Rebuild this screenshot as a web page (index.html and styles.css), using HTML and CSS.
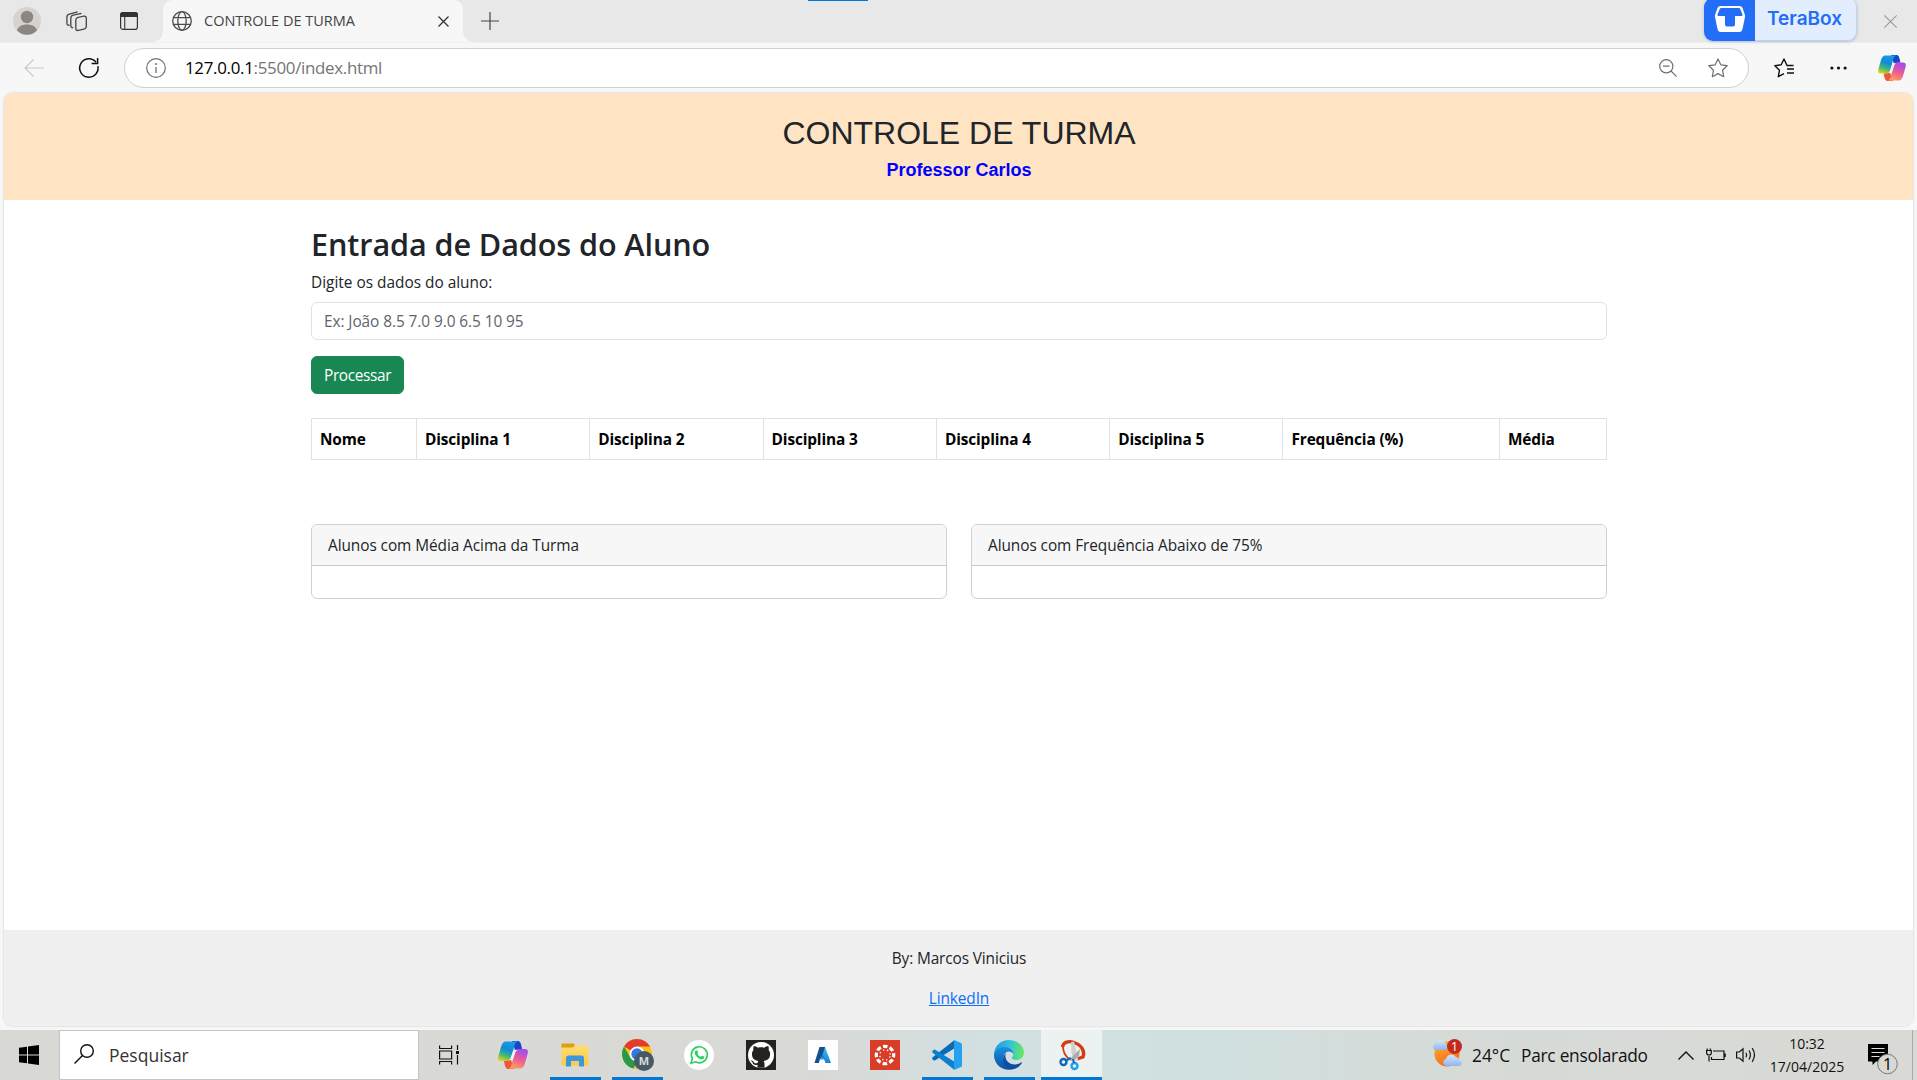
FILE: index.html
```html
<!DOCTYPE html>
<html lang="pt-BR">
<head>
<meta charset="utf-8">
<title>CONTROLE DE TURMA</title>
<link rel="stylesheet" href="styles.css">
</head>
<body>
<svg class="defs" width="0" height="0" aria-hidden="true">
  <defs>
    <linearGradient id="cpBlue" x1="0.6" y1="0" x2="0.2" y2="1"><stop offset="0" stop-color="#1a9bea"/><stop offset=".4" stop-color="#1388d8"/><stop offset=".7" stop-color="#3db87c"/><stop offset="1" stop-color="#e9d20c"/></linearGradient>
    <linearGradient id="cpPink" x1="0.7" y1="0" x2="0.3" y2="1"><stop offset="0" stop-color="#a04df0"/><stop offset=".5" stop-color="#ec5a97"/><stop offset="1" stop-color="#ffa25c"/></linearGradient>
    <linearGradient id="folder" x1="0" y1="0" x2="0" y2="1"><stop offset="0" stop-color="#ffdc73"/><stop offset="1" stop-color="#fcc944"/></linearGradient>
    <linearGradient id="edgeTop" x1="0" y1="0.5" x2="1" y2="0.6"><stop offset="0" stop-color="#1b9de2"/><stop offset=".5" stop-color="#35c1d8"/><stop offset="1" stop-color="#66eb5a"/></linearGradient>
    <linearGradient id="edgeLow" x1="0" y1="0" x2="0" y2="1"><stop offset="0" stop-color="#1a8fe0"/><stop offset="1" stop-color="#0c4fa5"/></linearGradient>
    <linearGradient id="azure" x1="0" y1="0" x2="0" y2="1"><stop offset="0" stop-color="#35c3f0"/><stop offset="1" stop-color="#1a80d8"/></linearGradient>
    <linearGradient id="sun" x1="0" y1="0" x2="0.4" y2="1"><stop offset="0" stop-color="#ffb52e"/><stop offset="1" stop-color="#f26b1c"/></linearGradient>
    <linearGradient id="cloud" x1="0" y1="0" x2="0" y2="1"><stop offset="0" stop-color="#d5e6fb"/><stop offset="1" stop-color="#8fb4ec"/></linearGradient>
    <symbol id="copilot" viewBox="0 0 30 28">
      <path d="M14 0h6c2 0 3 2 4 8l-7 1z" fill="#1746c9"/>
      <path d="M16 28h-6c-2 0-3-2-4-8l7-1z" fill="#f0543c"/>
      <path d="M8 .5C5 .5 4 3 3 6L.4 15C-.4 18.500.5 20 3 20h6.500c2.500 0 3.200-1.500 4-4.500L16 6c1-4 2-5.500 5-5.500z" fill="url(#cpBlue)"/>
      <path d="M22 27.500c3 0 4-2.500 5-5.500l2.600-9c.8-3.500-.1-5-2.600-5h-6.500c-2.500 0-3.200 1.500-4 4.500L14 22c-1 4-2 5.500-5 5.500z" fill="url(#cpPink)"/>
      <path d="M15.500 9h4c-1.500.7-2 2-2.600 4L14.800 19h-4c1.300-.6 1.800-1.700 2.400-3.700z" fill="#f4eff4"/>
    </symbol>
  </defs>
</svg>

<header class="tabstrip">
  <div class="tab-tools">
    <svg class="avatar" viewBox="0 0 28 28"><circle cx="14" cy="14" r="14" fill="#d6d3cf"/><circle cx="14" cy="10" r="6.200" fill="#8b8683"/><path d="M4 23.500c1-4 5-6 10-6s9 2 10 6a14 14 0 0 1-20 0z" fill="#8b8683"/></svg>
    <svg class="workspaces" viewBox="0 0 22 21" fill="none" stroke="#444" stroke-width="1.300"><rect x="9.800" y="5.500" width="10.500" height="13" rx="2.500" transform="skewY(-12) translate(0 3.500)"/><path d="M7.200 16.500c-1.700.3-2.400-.4-2.400-2V7c0-1.600.8-2.400 2.400-2.800l8.300-1.900"/><path d="M3.600 14.200C1.900 14.500.9 13.800.9 12.200V6c0-1.600.8-2.500 2.400-2.900L11.600.9"/></svg>
    <svg class="vtabs" viewBox="0 0 18 18"><rect x=".6" y=".6" width="16.800" height="16.800" rx="2.500" fill="none" stroke="#333" stroke-width="1.200"/><path d="M0 5V3q0-3 3-3h12q3 0 3 3v2z" fill="#333"/><path d="M4.700 5v12.500" stroke="#444" stroke-width="1.200"/></svg>
  </div>
  <div class="tab">
    <svg class="globe" viewBox="0 0 20 20" fill="none" stroke="#4b4b4b" stroke-width="1.300"><circle cx="10" cy="10" r="9.300"/><ellipse cx="10" cy="10" rx="4.200" ry="9.300"/><path d="M1.500 6.700h17M1.500 13.300h17"/></svg>
    <span class="tab-title">CONTROLE DE TURMA</span>
    <svg class="tab-close" viewBox="0 0 11 11"><path d="M.5.5l10 10M10.500.5l-10 10" stroke="#333" stroke-width="1.300"/></svg>
  </div>
  <svg class="new-tab" viewBox="0 0 18 18"><path d="M9 0v18M0 9h18" stroke="#444" stroke-width="1.200"/></svg>
  <div class="tera">
    <span class="tera-logo"><svg viewBox="0 0 30 26"><path d="M5.500 0h19c1.500 0 2.300.7 3 2l2.300 6.500c.4 1.500.1 2.500 0 3.500l-2.300 11c-.4 2-1.500 3-3 3h-19c-1.500 0-2.600-1-3-3L.2 12c-.2-1-.4-2 0-3.500L2.500 2c.7-1.300 1.500-2 3-2z" fill="#fff"/><path d="M7 2h16.500c1 0 1.500.5 2 1.400l2 5.200c.2.900 0 1.400-1 1.400H20v8.500q0 2-2 2h-6q-2 0-2-2V10H3.500c-1 0-1.200-.5-1-1.400l2-5.200C5 2.500 5.500 2 7 2z" fill="#226ef7"/></svg></span>
    <span class="tera-name">TeraBox</span>
  </div>
  <svg class="win-close" viewBox="0 0 13 13"><path d="M.3.300l12.400 12.400M12.700.3L.3 12.700" stroke="#999" stroke-width="1.100"/></svg>
  <i class="top-mark"></i>
</header>

<nav class="toolbar">
  <svg class="back" viewBox="0 0 20 18" fill="none" stroke="#c8c8c8" stroke-width="1.200"><path d="M20 9H1M9.500.5L1 9l8.500 8.500"/></svg>
  <svg class="reload" viewBox="0 0 20 20" fill="none" stroke="#111" stroke-width="1.500"><path d="M18.900 8.200A9.200 9.200 0 1 1 17 4.200"/><path d="M18.600 0v5.500h-6"/></svg>
  <div class="address">
    <svg class="info" viewBox="0 0 20 20"><circle cx="10" cy="10" r="9.300" fill="none" stroke="#707070" stroke-width="1.200"/><path d="M10 9v6" stroke="#707070" stroke-width="1.300"/><circle cx="10" cy="6" r="1" fill="#707070"/></svg>
    <span class="url"><b>127.0.0.1</b>:5500/index.html</span>
    <svg class="zoomout" viewBox="0 0 18 18" fill="none" stroke="#707070" stroke-width="1.200"><circle cx="7.300" cy="7.300" r="6.600"/><path d="M12 12l5.600 5.600M4 7.200h6.500"/></svg>
    <svg class="star" viewBox="0 0 20 20"><path d="M10 .9l2.800 5.900 6.400.9-4.700 4.500 1.200 6.500L10 15.600l-5.700 3.100 1.200-6.500L.8 7.700l6.400-.9z" fill="none" stroke="#707070" stroke-width="1.200" stroke-linejoin="round"/></svg>
  </div>
  <svg class="favs" viewBox="0 0 20 20" fill="none" stroke="#111" stroke-width="1.400" stroke-linejoin="round"><path d="M19.500 7.500h-6.500L10 1 7.200 6.800.8 7.700l4.700 4.500-1.200 6.500 5.700-3.100"/><path d="M13 11h7M13 15h7"/></svg>
  <svg class="dots" viewBox="0 0 17 4" fill="#111"><circle cx="1.900" cy="2" r="1.600"/><circle cx="8.500" cy="2" r="1.600"/><circle cx="15.100" cy="2" r="1.600"/></svg>
  <svg class="copilot-top"><use href="#copilot"/></svg>
</nav>

<div class="viewport">
  <div class="page">
    <div class="banner">
      <h1>CONTROLE DE TURMA</h1>
      <p>Professor Carlos</p>
    </div>
    <main class="container">
      <h2>Entrada de Dados do Aluno</h2>
      <label class="form-label">Digite os dados do aluno:</label>
      <div class="form-control">Ex: João 8.5 7.0 9.0 6.5 10 95</div>
      <button class="btn">Processar</button>
      <table>
        <colgroup><col class="c-name"><col class="c-disc"><col class="c-disc"><col class="c-disc"><col class="c-disc"><col class="c-disc"><col class="c-freq"><col></colgroup>
        <thead><tr><th>Nome</th><th>Disciplina 1</th><th>Disciplina 2</th><th>Disciplina 3</th><th>Disciplina 4</th><th>Disciplina 5</th><th>Frequência (%)</th><th>Média</th></tr></thead>
      </table>
      <div class="cards">
        <section class="card"><div class="card-header">Alunos com Média Acima da Turma</div><div class="card-body"></div></section>
        <section class="card"><div class="card-header">Alunos com Frequência Abaixo de 75%</div><div class="card-body"></div></section>
      </div>
    </main>
    <footer>
      <p>By: Marcos Vinicius</p>
      <p><a href="#">LinkedIn</a></p>
    </footer>
  </div>
</div>

<div class="taskbar">
  <div class="start"><svg viewBox="0 0 20 20"><path d="M0 2.800L8 1.700V9.400H0zM9 1.500L20 0v9.400H9zM0 10.500h8v7.800L0 17.200zM9 10.500h11V20L9 18.500z"/></svg></div>
  <div class="search">
    <svg viewBox="0 0 20 20" fill="none" stroke="#111" stroke-width="1.400"><circle cx="13" cy="7" r="6.300"/><path d="M8.500 11.500L.5 19.500"/></svg>
    <span>Pesquisar</span>
  </div>
  <div class="task view"><svg width="20" height="20" viewBox="0 0 20 20" fill="none" stroke="#111" stroke-width="1.200"><path d="M.6.500v3h12v-3M.6 19.500v-3h12v3M.6 6h12v8H.6zM18.500 0v5M18.500 10v9.500"/><path d="M17 6h3v3h-3z" fill="#111" stroke="none"/></svg></div>
  <div class="task"><svg width="30" height="28"><use href="#copilot"/></svg></div>
  <div class="task open"><svg width="28" height="24" viewBox="0 0 28 24"><path d="M.5 3V1.500Q.5.500 1.500.500h11q1 0 1 1V5H.5z" fill="#e0a00c"/><path d="M.5 4.500h11l2.500-2h12.500q1 0 1 1V21.500q0 1-1 1h-25q-1 0-1-1z" fill="url(#folder)"/><path d="M5 23.500V15q0-2.500 2.500-2.500h13q2.500 0 2.500 2.500v8.500h-5V18h-8v5.500z" fill="#3c97dd"/></svg></div>
  <div class="task open chrome"><svg width="34" height="34" viewBox="0 0 34 34"><circle cx="16" cy="16" r="15" fill="#fbc116"/><path d="M16 16L3 8.500A15 15 0 0 1 29 8.500H16z" fill="#e33b2e"/><path d="M3 8.500l6.500 11.300L16 23.500 12.500 30.600A15 15 0 0 1 3 8.500z" fill="#2a9a48"/><circle cx="16" cy="16" r="7.500" fill="#fff"/><circle cx="16" cy="16" r="5.700" fill="#3079ea"/><circle cx="23" cy="23" r="10" fill="#455a64"/><text x="23" y="27" text-anchor="middle" class="badge-m">M</text></svg></div>
  <div class="task"><svg width="30" height="30" viewBox="0 0 30 30"><circle cx="15" cy="15" r="15" fill="#fff"/><path d="M7 23.200l1.300-4.600a8 8 0 1 1 3.200 3.200z" fill="none" stroke="#2ed064" stroke-width="1.700"/><path d="M11.500 10.800c1-1 1.700-.7 2 .1l.6 1.500c.2.600-.8 1.200-.6 1.600.7 1.300 1.700 2.200 3 2.700.5.200 1-1.100 1.600-.9l1.700.8c.7.300.4 1.600-.5 2.300-1.200.8-2.700.5-4.500-.5-1.500-.9-2.800-2.200-3.600-3.800-.7-1.500-.6-2.900.3-3.800z" fill="#2ed064"/></svg></div>
  <div class="task"><svg width="30" height="30" viewBox="0 0 30 30"><path d="M0 0h30v30H0z" fill="#24211f"/><circle cx="15" cy="15" r="13" fill="#fff"/><path d="M11.500 27.800v-3c-3.500.7-4.400-.9-5-2.300-.4-.9-1.300-1.300-1.700-1.800 1.800-.5 2.600.9 3.200 1.700.9 1.200 2.300 1 3.500.6.100-.9.500-1.500 1-2-4-.5-6.500-2.300-6.500-7 0-1.600.6-2.900 1.500-3.900-.3-1-.3-2.500.3-4 1.500 0 2.900.8 4 1.600 2-.6 4.500-.6 6.500 0 1.100-.8 2.500-1.600 4-1.600.6 1.500.6 3 .3 4 .9 1 1.500 2.300 1.500 3.900 0 4.700-2.600 6.500-6.600 7 .7.600 1 1.600 1 2.700v4.100z" fill="#24211f"/></svg></div>
  <div class="task"><svg width="30" height="30" viewBox="0 0 30 30"><path d="M0 0h30v30H0z" fill="#fff"/><path d="M12 7h5l6 16h-5.500L12 9z" fill="url(#azure)"/><path d="M11.500 7H17l-2.500 8 2.500 4h-5l-1.200 4H6.500z" fill="#134f93"/><path d="M14 16l3.500 3.500h-6z" fill="#2f9be4"/></svg></div>
  <div class="task"><svg width="30" height="30" viewBox="0 0 30 30"><path d="M0 0h30v30H0z" fill="#d93d27"/><circle cx="15" cy="15" r="8.700" fill="none" stroke="#fff" stroke-width="3.200" stroke-dasharray="4.550 2.283" stroke-dashoffset="2.280"/><circle cx="15" cy="15" r="5.200" fill="none" stroke="#fff" stroke-width="1.300" stroke-dasharray="1.300 2.784" stroke-dashoffset="-1.400"/></svg></div>
  <div class="task open"><svg width="30" height="30" viewBox="0 0 30 30"><path d="M22.500 0L.4 17.400q-.7.900 0 1.700l1.200 1.100q.9.500 1.700 0L23 8z" fill="#0a6bb5"/><path d="M22.500 30L.4 12.600q-.7-.9 0-1.700l1.200-1.100q.9-.5 1.700 0L23 22z" fill="#0c80cf"/><path d="M22 0l7 3q1 .6 1 1.500v21q0 1-1 1.500l-7 3z" fill="#27a0f0"/></svg></div>
  <div class="task open"><svg width="30" height="30" viewBox="0 0 30 30"><path d="M0 14C1 5 7 0 15 0c9 0 15 6 15 12.500 0 5-4 7.500-8 7.500-3 0-5.500-1.200-3.500-3.500 1.500-2 1-6.500-4.500-8C8 7.500 2.500 9.500 0 14z" fill="url(#edgeTop)"/><path d="M0 14c1.500-4.500 6-7 10.500-7 5 0 9 3.500 9 7-1-1.500-2.500-2.500-4.500-2.500-4 0-6 4-5 8 1.300 5.500 6 9 11 9C10 33 0 25 0 15z" fill="url(#edgeLow)"/><path d="M12 13c-2 5 1 11.500 9 11.500 3.500 0 5-1.500 6.500-2.200.4-.1.700.3.400.7C23 31.500 12 31 9.500 23 8.500 18.500 10 15 12 13z" fill="#0f4f9f"/></svg></div>
  <div class="task open active"><svg width="28" height="30" viewBox="0 0 28 30"><path d="M4.500 7C5 2 11 .5 16 2.500c8 2.500 11 9 9 14.500l-6 2" fill="none" stroke="#d43b10" stroke-width="3.400"/><path d="M5 6.500c0 5 2 9 6 12.500" fill="none" stroke="#d43b10" stroke-width="1.800"/><path d="M13 2l3-.5 2.500 10.500 2 9-5-1-2-7z" fill="#cfcfcf"/><path d="M22 9l-6 6-5 5 3 1 7-5z" fill="#aaa"/><circle cx="5.500" cy="22" r="3" fill="none" stroke="#1067b8" stroke-width="2.400"/><circle cx="16.500" cy="26" r="3" fill="none" stroke="#1fa0ea" stroke-width="2.400"/><path d="M8 20.500l5-2.500M16 23l-1-4" stroke="#1067b8" stroke-width="2"/></svg></div>
  <div class="tray">
    <svg class="weather" viewBox="0 0 30 30"><circle cx="15" cy="15" r="12.500" fill="url(#sun)"/><path d="M3 11a3.500 3.500 0 0 1 .5-6.500A5 5 0 0 1 12 3c2 .3 3 2 2.500 3.500 2 1 1.500 4.500-1 4.500z" fill="url(#cloud)"/><path d="M14 27a3.600 3.600 0 0 1 0-7 5.500 5.500 0 0 1 10-2c1.500 0 3 1.500 2.700 3 3.800.5 3.800 6 0 6z" fill="url(#cloud)"/><circle cx="22.500" cy="7.500" r="7.500" fill="#c4281e"/><text x="22.500" y="12" text-anchor="middle" class="badge-1">1</text></svg>
    <span class="temp">24°C</span>
    <span class="sky">Parc ensolarado</span>
    <svg class="chev" viewBox="0 0 16 9"><path d="M.5 8.500L8 1l7.500 7.500" fill="none" stroke="#111" stroke-width="1.400"/></svg>
    <svg class="batt" viewBox="0 0 20 14" fill="none" stroke="#111" stroke-width="1.200"><path d="M7 3h11v8.500H5.500V9M19.200 5.500v3.500M3 8v5.500M1.200.5v2M4.300.5v2"/><path d="M.6 2.500h4.700v2.500q0 2-2.300 2t-2.400-2z"/></svg>
    <svg class="spk" viewBox="0 0 20 16" fill="none" stroke="#111" stroke-width="1.200"><path d="M.6 5h2.800L7 1.800v12.400L3.400 11H.6zM10 5.700q1.400 2.300 0 4.600M13 3.500q2.800 4.500 0 9M16.200 1.200q4.600 6.800 0 13.600"/></svg>
    <div class="clock"><span>10:32</span><span>17/04/2025</span></div>
    <svg class="notif" viewBox="0 0 30 31"><path d="M0 0h20v17.500H8l-3.500 3.500v-3.500H0z" fill="#000"/><path d="M3.500 4.500h13M3.500 8.500h13M3.500 12.500h8" stroke="#ddd" stroke-width="1.200"/><circle cx="19.500" cy="20" r="9.800" fill="#d8d8d4" stroke="#777" stroke-width="1"/><text x="19.500" y="25.500" text-anchor="middle" class="count">1</text></svg>
    <i class="peek"></i>
  </div>
</div>
</body>
</html>
```
FILE: styles.css
```css
* { box-sizing: border-box; }
html, body { margin: 0; height: 100%; overflow: hidden; }
body {
  display: flex;
  flex-direction: column;
  width: 1917px;
  height: 1080px;
  background: #f7f7f7;
  font: 15.400px/24px "Open Sans", "Noto Sans", sans-serif;
  color: #212529;
}
svg { display: block; flex: none; overflow: visible; }
.defs { position: absolute; }

/* tab strip */
.tabstrip {
  position: relative;
  display: flex;
  height: 42px;
  flex: none;
  background: #e8e8e8;
}
.tab-tools { display: flex; align-items: center; width: 163px; padding-left: 13px; }
.avatar { width: 28px; height: 28px; }
.workspaces { width: 22px; height: 21px; margin-left: 25px; }
.vtabs { width: 18px; height: 18px; margin-left: 32px; }
.tab {
  position: relative;
  display: flex;
  align-items: center;
  width: 300px;
  padding-left: 9px;
  background: #f7f7f7;
  border-radius: 9px 9px 0 0;
}
.tab::before, .tab::after {
  content: "";
  position: absolute;
  bottom: 0;
  width: 10px;
  height: 10px;
}
.tab::before { left: -10px; background: radial-gradient(circle at 0 0, transparent 9.500px, #f7f7f7 10px); }
.tab::after { right: -10px; background: radial-gradient(circle at 100% 0, transparent 9.500px, #f7f7f7 10px); }
.globe { width: 20px; height: 20px; }
.tab-title { margin: 0 0 0 12px; font-size: 14.500px; color: #444; }
.tab-close { width: 11px; height: 11px; margin: 1px 14px 0 auto; }
.new-tab { width: 18px; height: 18px; margin: 12px 0 0 18px; }
.tera {
  display: flex;
  width: 153px;
  height: 43px;
  margin: -2px 27px 0 auto;
  border-radius: 9px;
  overflow: hidden;
  box-shadow: 0 1px 3px rgba(60, 90, 150, .3);
}
.tera-logo { display: flex; align-items: center; justify-content: center; width: 51px; background: #226ef7; padding-bottom: 1px; }
.tera-logo svg { width: 30px; height: 26px; }
.tera-name {
  flex: 1;
  padding-left: 12px;
  background: #e2edfd;
  border: 1px solid #bdd2f5;
  border-left: 0;
  border-top: 0;
  border-radius: 0 9px 9px 0;
  color: #226ef7;
  font: 600 19px/42px Inter, sans-serif;
}
.win-close { width: 13px; height: 13px; margin: 15px 20px 0 0; }
.top-mark { position: absolute; left: 808px; top: 0; width: 60px; height: 1px; background: #0078d7; }

/* toolbar */
.toolbar { display: flex; align-items: center; height: 51px; flex: none; padding-left: 24px; border-top: 1px solid #f0f0f0; }
.back { width: 20px; height: 18px; }
.reload { width: 20px; height: 20px; margin-left: 35px; }
.address {
  display: flex;
  align-items: center;
  width: 1625px;
  height: 40px;
  margin-left: 25px;
  padding: 0 20px 0 21px;
  border: 1px solid #cfcfcf;
  border-radius: 20px;
  background: #fff;
}
.info { width: 20px; height: 20px; }
.url { margin: -1px 0 0 19px; font-size: 16.900px; letter-spacing: -.3px; color: #757575; white-space: nowrap; }
.url b { font-weight: 400; color: #000; }
.zoomout { width: 18px; height: 18px; margin-left: auto; }
.star { width: 20px; height: 20px; margin-left: 31px; }
.favs { width: 20px; height: 20px; margin-left: 25px; }
.dots { width: 17px; height: 4px; margin-left: 36px; }
.copilot-top { width: 28px; height: 26px; margin-left: 31px; }

/* page */
.viewport { height: 937px; flex: none; padding: 0 4px 4px; }
.page {
  display: flex;
  flex-direction: column;
  height: 933px;
  background: #fff;
  border-radius: 9px;
  overflow: hidden;
  box-shadow: 0 0 2px #b8b8bc;
}
.banner { height: 107px; padding: 21px 0 0 1px; background: #ffe4c4; text-align: center; font-family: "Liberation Sans", Arial, sans-serif; }
h1 { margin: 0; font-size: 32px; line-height: 38.400px; font-weight: 400; }
.banner p { margin: 8px 0 0; color: #00f; font-size: 18px; font-weight: 700; line-height: 21.600px; }
.container { width: 1296px; margin: 0 0 0 307px; padding-top: 25px; }
h2 { margin: 0 0 8px; font-size: 30.600px; line-height: 38.400px; font-weight: 600; letter-spacing: -.1px; }
.form-label { display: block; margin-bottom: 7px; }
.form-control { height: 38px; padding: 7px 12px 5px; border: 1px solid #dee2e6; border-radius: 6px; color: #5f6469; letter-spacing: -.07px; }
.btn { display: block; width: 93px; height: 38px; margin: 16px 0 24px; padding: 7px 12px 5px; border: 1px solid #198754; border-radius: 6px; background: #198754; color: #fff; font: inherit; letter-spacing: -.36px; }
table { width: 1296px; table-layout: fixed; border-collapse: collapse; margin-bottom: 64px; color: #000; }
th { height: 41px; padding: 9px 8px 7px; border: 1px solid #dee2e6; text-align: left; font-weight: 700; white-space: nowrap; letter-spacing: -.14px; }
.c-name { width: 105px; }
.c-disc { width: 173.300px; }
.c-freq { width: 216.500px; }
.cards { display: grid; grid-template-columns: 1fr 1fr; gap: 24px; }
.card { border: 1px solid #d0d0d0; border-radius: 6px; overflow: hidden; }
.card-header { height: 41px; padding: 9px 16px 7px; background: #f7f7f7; border-bottom: 1px solid #c8c8c8; letter-spacing: -.07px; }
.card-body { height: 32px; }
footer { margin-top: auto; height: 96px; padding: 17px 15px 15px 16px; background: #f0f0f0; text-align: center; letter-spacing: -.12px; }
footer p { margin: 0 0 16px; }
footer a { color: #0d6efd; }

/* taskbar */
.taskbar {
  display: flex;
  height: 50px;
  flex: none;
  background: linear-gradient(90deg, #d8d8d4 0, #d9d9d6 800px, #d2e0e1 1000px, #d0e0e1 1200px, #d6dbd7 1450px, #d9d9d5 1917px);
}
.start { width: 59px; padding: 15px 0 0 19px; }
.start svg { width: 20px; height: 20px; }
.search { display: flex; align-items: center; width: 360px; padding-left: 14px; border: 1px solid #c5c5c5; background: #fff; color: #333; font-size: 17.500px; }
.search svg { width: 20px; height: 20px; margin-top: -2px; }
.search span { margin-left: 15px; }
.task { display: flex; align-items: center; justify-content: center; width: 62px; position: relative; }
.task.view { width: 63px; padding-right: 3px; }
.chrome { padding-left: 2px; }
.open::after { content: ""; position: absolute; left: 6px; right: 5px; bottom: 0; height: 3px; background: #0078d7; }
.task.active { width: 61px; margin-left: 1px; background: #ecf2f2; }
.active::after { left: 0; right: 0; }
.badge-m { font: 700 11px "Open Sans", sans-serif; fill: #d7dde0; }
.badge-1 { font: 13px "Open Sans", sans-serif; fill: #fff; }
.count { font: 16px "Open Sans", sans-serif; fill: #000; }
.tray { display: flex; flex: 1; align-items: center; color: #111; font-size: 17.300px; white-space: nowrap; }
.weather { width: 30px; height: 30px; margin: 0 0 3px 330px; }
.temp { width: 39px; margin: 1px 0 0 10px; }
.sky { width: 127px; margin: 1px 0 0 10px; letter-spacing: -.24px; }
.chev { width: 16px; height: 9px; margin-left: 30px; }
.batt { width: 20px; height: 14px; margin-left: 12px; }
.spk { width: 20px; height: 16px; margin-left: 10px; }
.clock { display: flex; flex-direction: column; align-items: center; width: 76px; margin-left: 13px; font-size: 14px; line-height: 23px; }
.notif { width: 30px; height: 31px; margin: 9px 0 0 23px; }
.peek { align-self: stretch; width: 1px; margin-left: auto; margin-right: 4px; background: #aaa; }
```
